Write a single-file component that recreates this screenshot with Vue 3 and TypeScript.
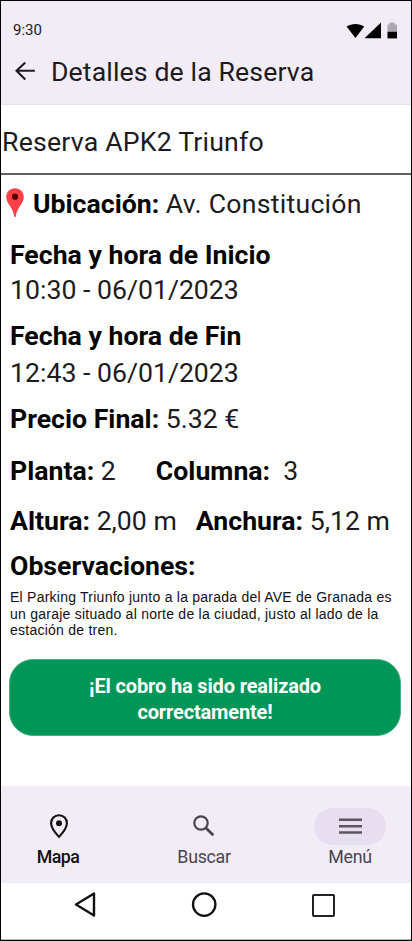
<script setup lang="ts">
interface Detail {
  label: string
  value: string
}

const start: Detail = { label: 'Fecha y hora de Inicio', value: '10:30 - 06/01/2023' }
const end: Detail = { label: 'Fecha y hora de Fin', value: '12:43 - 06/01/2023' }
</script>

<template>
  <div class="screen">
    <header class="top">
      <div class="status">
        <span class="clock">9:30</span>
        <svg class="signals" width="52" height="18" viewBox="0 0 52 18">
          <path d="M.5 4.600C5.500 1.200 13.500 1.200 18.200 4.600L9.500 16Z" fill="#000" />
          <path d="M18.500 16.200L35 .5V16.200Z" fill="#000" />
          <path d="M41.500 10V2.500H43.500V.5h5v2h2.500v7.500Z" fill="#aca7b0" />
          <path d="M41.500 9.800h9.500V16.400h-9.500Z" fill="#000" />
        </svg>
      </div>
      <div class="bar">
        <svg class="back" width="20" height="20" viewBox="0 0 20 20" fill="none" stroke="#1d1b20" stroke-width="2.100">
          <path d="M19.800 8.800H1.500M10.300 .5L1.500 8.800l8.800 8.800" />
        </svg>
        <h1 class="title">Detalles de la Reserva</h1>
      </div>
    </header>

    <main class="content">
      <h2 class="name">Reserva APK2 Triunfo</h2>

      <div class="row location">
        <svg class="pin" width="18" height="30" viewBox="0 0 18 30">
          <path d="M9 .3C4 .3.200 4.200.200 9c0 6.500 7 10.500 8 19.500q.8 1 1.600 0c1-9 8-13 8-19.500C17.800 4.200 14 .3 9 .3Z" fill="#fb4147" />
          <circle cx="9" cy="8.700" r="3.100" fill="#590000" />
        </svg>
        <p class="line place"><b>Ubicación:</b> <span class="street">Av. Constitución</span></p>
      </div>

      <p class="line start-label"><b>{{ start.label }}</b></p>
      <p class="line start-value">{{ start.value }}</p>
      <p class="line end-label"><b>{{ end.label }}</b></p>
      <p class="line end-value">{{ end.value }}</p>
      <p class="line price"><b>Precio Final:</b> 5.32 €</p>
      <div class="row slot">
        <p class="line floor"><b>Planta:</b> 2</p>
        <p class="line column"><b>Columna:</b>&nbsp; 3</p>
      </div>
      <div class="row size">
        <p class="line height"><b>Altura:</b> 2,00 m</p>
        <p class="line width"><b>Anchura:</b> 5,12 m</p>
      </div>
      <p class="line notes-label"><b>Observaciones:</b></p>
      <p class="notes">
        <span>El Parking Triunfo junto a la parada del AVE de Granada es</span>
        <span>un garaje situado al norte de la ciudad, justo al lado de la</span>
        <span>estación de tren.</span>
      </p>
      <button class="paid" type="button">¡El cobro ha sido realizado<br />correctamente!</button>
    </main>

    <nav class="tabs">
      <a class="tab active">
        <span class="pill">
          <svg width="20" height="26" viewBox="0 0 20 26">
            <path d="M10 1.300c-4.600 0-7.900 3.500-7.900 7.900 0 5.300 4 9.500 7.900 13.700 3.900-4.200 7.900-8.400 7.900-13.700C17.900 4.800 14.600 1.300 10 1.300Z" fill="none" stroke="#111" stroke-width="2.100" />
            <circle cx="10" cy="9.200" r="3" fill="#111" />
          </svg>
        </span>
        <span class="tab-text">Mapa</span>
      </a>
      <a class="tab">
        <span class="pill">
          <svg width="24" height="26" viewBox="0 0 24 26" fill="none" stroke="#49454f">
            <circle cx="9" cy="9" r="6.700" stroke-width="2.200" />
            <path d="M13.700 13.700L21.300 21.300" stroke-width="2.700" />
          </svg>
        </span>
        <span class="tab-text">Buscar</span>
      </a>
      <a class="tab">
        <span class="pill selected">
          <svg width="23" height="17" viewBox="0 0 23 17" stroke="#5a5561" stroke-width="2.500">
            <path d="M0 1.800h23M0 8.200h23M0 14.600h23" />
          </svg>
        </span>
        <span class="tab-text">Menú</span>
      </a>
    </nav>

    <footer class="system">
      <svg width="22" height="26" viewBox="0 0 22 26" fill="none" stroke="#111" stroke-width="2.400" stroke-linejoin="round">
        <path d="M20 1.500v22L2 12.500Z" />
      </svg>
      <svg width="26" height="26" viewBox="0 0 26 26" fill="none" stroke="#111" stroke-width="2.300">
        <circle cx="13.200" cy="12.600" r="11.200" />
      </svg>
      <svg width="24" height="26" viewBox="0 0 24 26" fill="none" stroke="#222" stroke-width="2">
        <rect x="2" y="3" width="21" height="21" rx=".8" />
      </svg>
    </footer>
  </div>
</template>

<style>
body {
  margin: 0;
  background: #fff;
}
</style>

<style scoped>
.screen {
  box-sizing: border-box;
  width: 412px;
  height: 941px;
  border: 1px solid #000;
  background: #fff;
  color: #1d1b20;
  font-family: Roboto, "Liberation Sans", sans-serif;
  display: flex;
  flex-direction: column;
  overflow: hidden;
}
h1, h2, p { margin: 0; font-weight: 400; }
.top {
  box-sizing: border-box;
  height: 104px;
  background: #f2ecf7;
  border-bottom: 1px solid #e5e1e8;
  flex: none;
}
.status {
  display: flex;
  justify-content: space-between;
  padding: 21px 13px 0 12px;
  height: 28px;
}
.clock { font-size: 15px; line-height: 16px; }
.bar {
  display: flex;
  align-items: center;
  height: 44px;
  padding-left: 14px;
  gap: 16px;
}
.title { font-size: 26.67px; line-height: 30px; letter-spacing: .12px; white-space: nowrap; }
.content { flex: none; height: 681px; display: flex; flex-direction: column; }
.name {
  box-sizing: border-box;
  height: 70px;
  padding: 22px 0 0 1px;
  font-size: 26.67px;
  line-height: 30px;
  letter-spacing: .2px;
  border-bottom: 2px solid #626262;
}
.line { font-size: 26.67px; line-height: 30px; white-space: nowrap; padding-left: 9px; }
.line b { font-weight: 700; color: #050505; }
.row { display: flex; }
.location { margin-top: 13px; }
.pin { margin-left: 5px; flex: none; }
.location .line { padding: 1px 0 0 9px; }
.street { letter-spacing: .25px; }
.start-label { margin-top: 21px; }
.start-value { margin-top: 5px; }
.end-label { margin-top: 16px; }
.end-value { margin-top: 7px; }
.price { margin-top: 16px; }
.slot { margin-top: 22px; }
.size { margin-top: 20px; }
.slot .column { padding-left: 40px; }
.size .width { padding-left: 19px; }
.notes-label { margin-top: 15px; }
.notes {
  margin: 8px 0 0 9px;
  font: 14px/16.5px "Liberation Sans", sans-serif;
  letter-spacing: .24px;
  white-space: nowrap;
  color: #111;
}
.notes span { display: block; }
.paid {
  margin: 20px 10px 0 8px;
  height: 77px;
  flex: none;
  padding: 3px 0 0;
  border: 1px solid #43b183;
  border-radius: 24px;
  background: #009657;
  color: #fff;
  font: 700 20px/26px Roboto, sans-serif;
  letter-spacing: -.15px;
}
.tabs {
  box-sizing: border-box;
  height: 97px;
  flex: none;
  background: #f2ecf7;
  display: grid;
  grid-template-columns: 130px 146px 134px;
  padding-top: 22px;
}
.tab { display: flex; flex-direction: column; align-items: center; color: #49454f; }
.tab:first-child { padding-right: 16px; }
.tab:last-child { padding-left: 12px; }
.tab.active { color: #111; }
.pill { width: 72px; height: 37px; display: flex; align-items: center; justify-content: center; }
.active .pill { padding-left: 2px; }
.pill.selected { background: #e7dff0; border-radius: 19px; }
.tab-text { margin-top: 2px; font-size: 17.800px; line-height: 20px; letter-spacing: -.3px; }
.active .tab-text { font-weight: 500; letter-spacing: -.5px; }
.system {
  box-sizing: border-box;
  display: flex;
  align-items: center;
  padding: 0 76px 13px 73px;
  justify-content: space-between;
  flex: 1;
  border-bottom: 1px solid #b5b5b5;
}
</style>
